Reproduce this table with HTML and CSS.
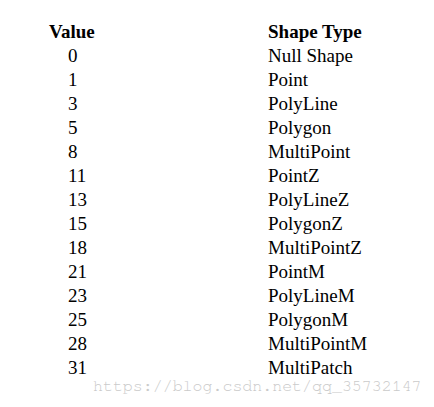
FILE: index.html
```html
<!DOCTYPE html>
<html>
<head>
<meta charset="utf-8">
<link rel="stylesheet" href="styles.css">
</head>
<body>
<div class="page">
  <div class="table">
    <div class="hd">Value</div><div class="hd">Shape Type</div>
    <div class="num">0</div><div class="name">Null Shape</div>
    <div class="num">1</div><div class="name">Point</div>
    <div class="num">3</div><div class="name">PolyLine</div>
    <div class="num">5</div><div class="name">Polygon</div>
    <div class="num">8</div><div class="name">MultiPoint</div>
    <div class="num">11</div><div class="name">PointZ</div>
    <div class="num">13</div><div class="name">PolyLineZ</div>
    <div class="num">15</div><div class="name">PolygonZ</div>
    <div class="num">18</div><div class="name">MultiPointZ</div>
    <div class="num">21</div><div class="name">PointM</div>
    <div class="num">23</div><div class="name">PolyLineM</div>
    <div class="num">25</div><div class="name">PolygonM</div>
    <div class="num">28</div><div class="name">MultiPointM</div>
    <div class="num">31</div><div class="name">MultiPatch</div>
  </div>
  <div class="watermark">https://blog.csdn.net/qq_35732147</div>
</div>
</body>
</html>
```
FILE: styles.css
```css
html, body {
  margin: 0;
  padding: 0;
  background: #fff;
}
.page {
  position: relative;
  width: 434px;
  height: 407px;
  overflow: hidden;
}
.table {
  display: grid;
  grid-template-columns: 219px auto;
  grid-auto-rows: 24px;
  padding: 20px 0 0 49px;
  font-family: "Liberation Serif", "Times New Roman", serif;
  font-size: 19px;
  line-height: 24px;
  color: #000;
}
.hd {
  font-weight: bold;
}
.num {
  padding-left: 19px;
}
.watermark {
  position: absolute;
  left: 93px;
  top: 377px;
  font-family: "Nimbus Mono PS", "FreeMono", "Courier New", "Liberation Mono", monospace;
  font-size: 16.6px;
  line-height: 18px;
  color: #cacaca;
  white-space: nowrap;
}
```
